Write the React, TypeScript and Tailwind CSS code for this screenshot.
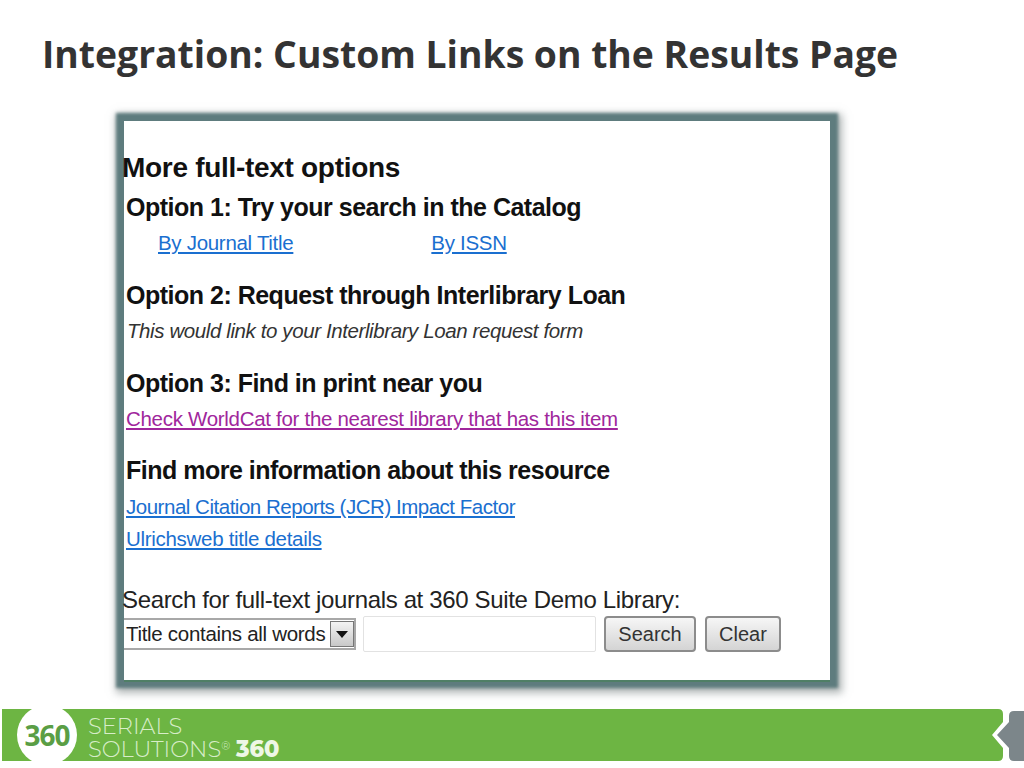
const sans = "font-['Liberation_Sans',Arial,sans-serif]";

function Heading({ children }: { children: React.ReactNode }) {
  return <div className="h-[36px] pl-[2px] text-[25px] leading-[36px] font-bold whitespace-nowrap text-[#111] tracking-[-0.5px]">{children}</div>;
}

function PanelLink({ children, color = "text-[#1a6fd0]", tracking = "tracking-[-0.3px]" }: { children: React.ReactNode; color?: string; tracking?: string }) {
  return <a className={`${color} ${tracking} underline text-[20.5px] leading-[36px] whitespace-nowrap`}>{children}</a>;
}

function Footer() {
  return (
    <div className="mt-[29px] ml-[2px] flex h-[52px] items-stretch">
      <div className="relative flex h-[52px] w-[960px] items-center bg-[#6db543] pl-[86px] pt-[5px]">
        <div className="absolute left-[15px] top-0 flex h-[52px] w-[60px] items-center justify-center overflow-hidden">
          <div className="flex h-[60px] w-[60px] shrink-0 items-center justify-center rounded-full bg-white text-[28px] font-bold tracking-[-1px] text-[#5a9e45] font-['Open_Sans',sans-serif]">360</div>
        </div>
        <div className="font-['Montserrat','Open_Sans',sans-serif] font-light text-[#d8edc9] text-[22.5px] leading-[23px] whitespace-nowrap">
          <div className="h-[23px]">SERIALS</div>
          <div className="h-[23px]">
            SOLUTIONS<span className="align-[7px] text-[11px] leading-none">®</span> <span className="font-extrabold text-[#eef7e6]">360</span>
          </div>
        </div>
      </div>
      <svg width="62" height="52" viewBox="0 0 62 52" className="block shrink-0">
        <path d="M0 0H36Q41 0 41 5V13L30 26L41 39V47Q41 52 36 52H0Z" fill="#6db543" />
        <path d="M62 2H52Q47 2 47 7V13L35 26L47 39V47Q47 52 52 52H62Z" fill="#7c868a" />
      </svg>
    </div>
  );
}

export default function App() {
  return (
    <div className={`${sans} h-[768px] w-[1024px] overflow-hidden bg-white`}>
      <h1 className="pl-[42px] pt-[29px] h-[121px] text-[37.3px] leading-[50px] font-bold whitespace-nowrap text-[#333] font-['Open_Sans',sans-serif]">
        Integration: Custom Links on the Results Page
      </h1>

      <div className="ml-[124px] h-[559px] w-[706px] bg-white pt-[29px] text-[#222] shadow-[0_2px_0_0_#4f7f66,0_0_3px_8px_#5e7c7e,2px_3px_8px_10px_rgba(110,120,120,0.55)]">
        <div className="-ml-[2px] h-[39px] text-[28px] leading-[36px] font-bold whitespace-nowrap text-[#111] tracking-[-0.3px]">More full-text options</div>
        <Heading>Option 1: Try your search in the Catalog</Heading>
        <div className="ml-[34px] flex h-[52px] gap-[138px]">
          <PanelLink>By Journal Title</PanelLink>
          <PanelLink>By ISSN</PanelLink>
        </div>
        <Heading>Option 2: Request through Interlibrary Loan</Heading>
        <div className="ml-[3px] h-[52px] text-[20.5px] leading-[36px] whitespace-nowrap italic tracking-[-0.4px] text-[#333]">This would link to your Interlibrary Loan request form</div>
        <Heading>Option 3: Find in print near you</Heading>
        <div className="ml-[2px] flex h-[51px]">
          <PanelLink color="text-[#a0269c]">Check WorldCat for the nearest library that has this item</PanelLink>
        </div>
        <Heading>Find more information about this resource</Heading>
        <div className="ml-[2px] mt-[3px] flex h-[32px] items-center"><PanelLink tracking="tracking-[-0.48px]">Journal Citation Reports (JCR) Impact Factor</PanelLink></div>
        <div className="ml-[2px] flex h-[32px] items-center"><PanelLink>Ulrichsweb title details</PanelLink></div>
        <div className="-ml-[2px] mt-[28px] h-[33px] text-[24px] leading-[34px] whitespace-nowrap tracking-[-0.35px] text-[#222]">Search for full-text journals at 360 Suite Demo Library:</div>
        <div className="flex h-[36px] items-center">
          <div className="flex h-[32px] w-[232px] items-center justify-between border-y-2 border-r-2 border-[#a8a8a8] pl-[2px] text-[20.5px] tracking-[-0.3px] text-[#222]">
            <span className="whitespace-nowrap">Title contains all words</span>
            <span className="flex h-[26px] w-[24px] shrink-0 items-center justify-center border border-[#777] bg-gradient-to-b from-[#f4f4f4] to-[#c8c8c8]">
              <svg width="12" height="7" viewBox="0 0 12 7"><path d="M0 0H12L6 7Z" fill="#111" /></svg>
            </span>
          </div>
          <div className="ml-[7px] h-[36px] w-[233px] rounded-[2px] border border-[#e2e2e2]" />
          <button className="ml-[8px] h-[36px] w-[92px] rounded-[4px] border-2 border-[#8c8c8c] bg-gradient-to-b from-[#f6f6f6] to-[#d4d4d4] text-[20px] text-[#333]">Search</button>
          <button className="ml-[9px] h-[36px] w-[76px] rounded-[4px] border-2 border-[#8c8c8c] bg-gradient-to-b from-[#f6f6f6] to-[#d4d4d4] text-[20px] text-[#333]">Clear</button>
        </div>
      </div>

      <Footer />
    </div>
  );
}
